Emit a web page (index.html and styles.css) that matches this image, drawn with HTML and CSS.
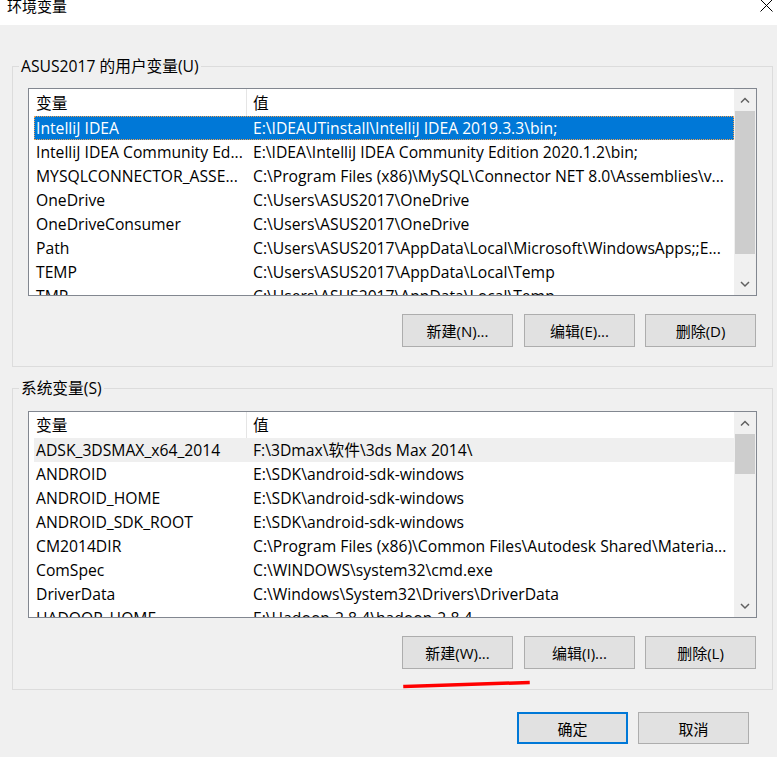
FILE: index.html
```html
<!DOCTYPE html>
<html lang="zh-CN">
<head>
<meta charset="utf-8">
<title>环境变量</title>
<link rel="stylesheet" href="styles.css">
</head>
<body>
<div class="window">
  <header class="titlebar">
    <span class="title">环境变量</span>
    <svg class="close" width="13" height="13" viewBox="0 0 13 13"><path d="M0.5 0.5L12.5 12.5M12.5 0.5L0.5 12.5" stroke="#000" stroke-width="1" fill="none"/></svg>
  </header>
  <main class="dialog">
    <section class="group">
      <div class="group-title">ASUS2017 的用户变量(U)</div>
      <div class="list">
        <div class="list-body">
          <div class="list-head"><span class="cell">变量</span><span class="cell cell-value">值</span></div>
          <div class="row selected"><span class="cell">IntelliJ IDEA</span><span class="cell cell-value">E:\IDEAUTinstall\IntelliJ IDEA 2019.3.3\bin;</span></div>
          <div class="row"><span class="cell">IntelliJ IDEA Community Ed...</span><span class="cell cell-value">E:\IDEA\IntelliJ IDEA Community Edition 2020.1.2\bin;</span></div>
          <div class="row"><span class="cell">MYSQLCONNECTOR_ASSE...</span><span class="cell cell-value">C:\Program Files (x86)\MySQL\Connector NET 8.0\Assemblies\v...</span></div>
          <div class="row"><span class="cell">OneDrive</span><span class="cell cell-value">C:\Users\ASUS2017\OneDrive</span></div>
          <div class="row"><span class="cell">OneDriveConsumer</span><span class="cell cell-value">C:\Users\ASUS2017\OneDrive</span></div>
          <div class="row"><span class="cell">Path</span><span class="cell cell-value">C:\Users\ASUS2017\AppData\Local\Microsoft\WindowsApps;;E...</span></div>
          <div class="row"><span class="cell">TEMP</span><span class="cell cell-value">C:\Users\ASUS2017\AppData\Local\Temp</span></div>
          <div class="row"><span class="cell">TMP</span><span class="cell cell-value">C:\Users\ASUS2017\AppData\Local\Temp</span></div>
        </div>
        <div class="scrollbar">
          <div class="sb-btn"><svg width="22" height="22" viewBox="0 0 22 22"><path d="M7 13.5L11 9.5L15 13.5" stroke="#606060" stroke-width="1.5" fill="none"/></svg></div>
          <div class="sb-track"><div class="sb-thumb thumb-user"></div></div>
          <div class="sb-btn"><svg width="22" height="22" viewBox="0 0 22 22"><path d="M7 9L11 13L15 9" stroke="#606060" stroke-width="1.5" fill="none"/></svg></div>
        </div>
      </div>
      <div class="buttons">
        <button class="btn">新建(N)...</button>
        <button class="btn">编辑(E)...</button>
        <button class="btn">删除(D)</button>
      </div>
    </section>

    <section class="group group-system">
      <div class="group-title">系统变量(S)</div>
      <div class="list list-system">
        <div class="list-body">
          <div class="list-head"><span class="cell">变量</span><span class="cell cell-value">值</span></div>
          <div class="row hot"><span class="cell">ADSK_3DSMAX_x64_2014</span><span class="cell cell-value">F:\3Dmax\软件\3ds Max 2014\</span></div>
          <div class="row"><span class="cell">ANDROID</span><span class="cell cell-value">E:\SDK\android-sdk-windows</span></div>
          <div class="row"><span class="cell">ANDROID_HOME</span><span class="cell cell-value">E:\SDK\android-sdk-windows</span></div>
          <div class="row"><span class="cell">ANDROID_SDK_ROOT</span><span class="cell cell-value">E:\SDK\android-sdk-windows</span></div>
          <div class="row"><span class="cell">CM2014DIR</span><span class="cell cell-value">C:\Program Files (x86)\Common Files\Autodesk Shared\Materia...</span></div>
          <div class="row"><span class="cell">ComSpec</span><span class="cell cell-value">C:\WINDOWS\system32\cmd.exe</span></div>
          <div class="row"><span class="cell">DriverData</span><span class="cell cell-value">C:\Windows\System32\Drivers\DriverData</span></div>
          <div class="row"><span class="cell">HADOOP_HOME</span><span class="cell cell-value">E:\Hadoop-2.8.4\hadoop-2.8.4</span></div>
        </div>
        <div class="scrollbar">
          <div class="sb-btn"><svg width="22" height="22" viewBox="0 0 22 22"><path d="M7 13.5L11 9.5L15 13.5" stroke="#606060" stroke-width="1.5" fill="none"/></svg></div>
          <div class="sb-track"><div class="sb-thumb thumb-system"></div></div>
          <div class="sb-btn"><svg width="22" height="22" viewBox="0 0 22 22"><path d="M7 9L11 13L15 9" stroke="#606060" stroke-width="1.5" fill="none"/></svg></div>
        </div>
      </div>
      <div class="buttons">
        <button class="btn">新建(W)...</button>
        <button class="btn">编辑(I)...</button>
        <button class="btn">删除(L)</button>
      </div>
    </section>

    <div class="footer">
      <button class="btn btn-footer btn-default">确定</button>
      <button class="btn btn-footer">取消</button>
    </div>
  </main>
  <svg class="annotation" width="132" height="14" viewBox="0 0 132 14"><path d="M5 9.5L128 5.5" stroke="#ff0000" stroke-width="3.5" stroke-linecap="square" fill="none"/></svg>
</div>
</body>
</html>
```

FILE: styles.css
```css
* {
  box-sizing: border-box;
}

body {
  margin: 0;
  background: #f0f0f0;
  font-family: "Open Sans", "Noto Sans CJK SC", sans-serif;
  font-size: 15.7px;
  color: #000;
}

.window {
  position: relative;
  width: 777px;
  height: 757px;
  overflow: hidden;
}

.titlebar {
  height: 25px;
  background: #fff;
  display: flex;
  justify-content: space-between;
  align-items: flex-start;
  padding: 0 4px 0 7px;
}

.title {
  font-family: "Noto Sans CJK SC", sans-serif;
  font-size: 15px;
  line-height: 15px;
  margin-top: -2px;
}

.close {
  margin-top: -1px;
}

.dialog {
  padding: 41px 4px 0 12px;
}

.group {
  border: 1px solid #dcdcdc;
  padding: 0 15px 19px 15px;
}

.group-system {
  margin-top: 21px;
  padding-bottom: 20px;
}

.group-title {
  width: fit-content;
  height: 20px;
  line-height: 20px;
  margin: -11px 0 0 -9px;
  padding: 0 2px;
  background: #f0f0f0;
}

.list {
  margin-top: 12px;
  height: 208px;
  border: 1px solid #828790;
  background: #fff;
  display: flex;
}

.list-system {
  margin-top: 13px;
  height: 207px;
}

.list-body {
  flex: 1;
  overflow: hidden;
}

.list-head,
.row {
  display: grid;
  grid-template-columns: 212px 1fr;
  margin-left: 5px;
  white-space: nowrap;
}

.list-head {
  height: 27px;
  line-height: 28px;
}

.list-system .list-head {
  height: 26px;
  line-height: 27px;
}

.cell {
  padding-left: 2px;
  overflow: hidden;
}

.list-head .cell-value {
  border-left: 1px solid #e5e5e5;
  padding-left: 6px;
}

.row {
  height: 24px;
  line-height: 24px;
}

.row .cell-value {
  padding-left: 7px;
}

.selected {
  background: #0078d7;
  color: #fff;
  outline: 1px dotted #f0a050;
  outline-offset: -1px;
}

.hot {
  background: #efefef;
}

.scrollbar {
  width: 22px;
  flex: none;
  background: #f0f0f0;
  display: flex;
  flex-direction: column;
}

.sb-btn {
  height: 22px;
  flex: none;
}

.sb-btn svg {
  display: block;
}

.sb-track {
  flex: 1;
}

.sb-thumb {
  margin: 0 1px;
  background: #cdcdcd;
}

.thumb-user {
  height: 143px;
}

.thumb-system {
  height: 40px;
}

.buttons {
  display: flex;
  justify-content: flex-end;
  gap: 10px;
  margin-top: 18px;
  margin-right: 1px;
}

.buttons .btn:first-child {
  margin-right: 1px;
}

.btn {
  width: 111px;
  height: 33px;
  padding: 0;
  background: #e1e1e1;
  border: 1px solid #adadad;
  font-family: "Open Sans", "Noto Sans CJK SC", sans-serif;
  font-size: 15px;
  color: #000;
}

.footer {
  display: flex;
  justify-content: flex-end;
  gap: 10px;
  margin: 22px 24px 0 0;
}

.btn-footer {
  height: 32px;
}

.btn-default {
  border: 2px solid #0078d7;
}

.annotation {
  position: absolute;
  left: 400px;
  top: 677px;
}
```
